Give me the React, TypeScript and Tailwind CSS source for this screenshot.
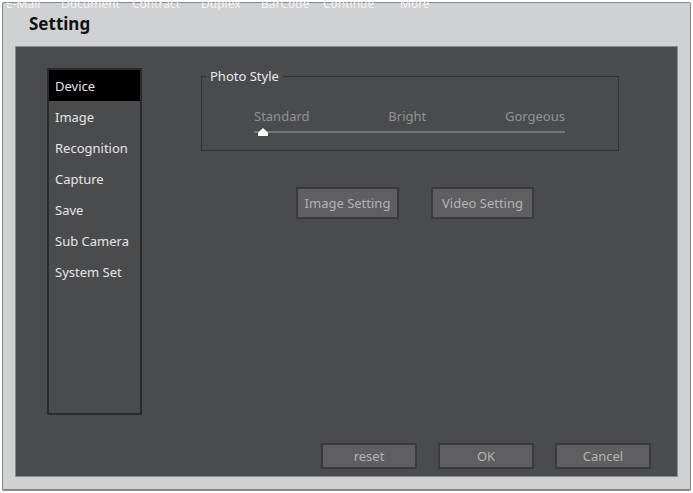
import { useState } from 'react'
import clsx from 'clsx'

const MENU = ['E-Mail', 'Document', 'Contract', 'Duplex', 'BarCode', 'Continue', 'More']

const TABS = ['Device', 'Image', 'Recognition', 'Capture', 'Save', 'Sub Camera', 'System Set']

const STYLES = ['Standard', 'Bright', 'Gorgeous']

function DialogButton({ label, className }: { label: string; className: string }) {
  return (
    <button
      type="button"
      className={clsx(
        'border-2 border-[#3a3a3c] bg-[#5f5f61] text-[13px] leading-4 text-[#b4b4b6]',
        className,
      )}
    >
      {label}
    </button>
  )
}

export default function App() {
  const [tab, setTab] = useState('Device')
  const [photoStyle, setPhotoStyle] = useState(0)

  return (
    <div className="relative flex h-screen flex-col overflow-hidden bg-white p-0.5 font-['Noto_Sans','Open_Sans',sans-serif]">
      {/* Main window menu, mostly hidden above the dialog */}
      <nav className="absolute -top-1 left-1.5 grid grid-cols-[55px_71px_69px_60px_62px_77px_auto] text-[12px] leading-4 text-[#f4f4f4]">
        {MENU.map((item) => (
          <span key={item}>{item}</span>
        ))}
      </nav>

      {/* Dialog */}
      <main className="flex flex-1 flex-col rounded-xs border border-b-2 border-[#858687] bg-[#d0d1d2] px-3 pb-3">
        <h1 className="px-3.5 pt-[9px] pb-2.5 text-[17px] leading-6 font-bold text-[#111]">Setting</h1>

        <div className="flex flex-1 flex-col border border-[#8b8c8d] bg-[#4a4b4d] pt-[21px] pr-[26px] pb-[7px] pl-[31px]">
          <div className="flex gap-[59px]">
            <ul className="h-[347px] w-[95px] shrink-0 border-2 border-[#2b2b2d]">
              {TABS.map((name) => (
                <li key={name}>
                  <button
                    type="button"
                    onClick={() => setTab(name)}
                    className={clsx(
                      'block h-[31px] w-full pl-1.5 text-left text-[13px] leading-4 whitespace-nowrap text-[#e6e6e6]',
                      tab === name && 'bg-black',
                    )}
                  >
                    {name}
                  </button>
                </li>
              ))}
            </ul>

            <section className="flex-1 pr-8">
              <fieldset className="border border-[#313234] pr-[53px] pb-2.5 pl-[52px]">
                <legend className="-ml-12 px-1 text-[13px] leading-4 text-[#ececec]">
                  Photo Style
                </legend>
                <div className="flex justify-between pt-6 text-[13px] leading-4 text-[#929395]">
                  {STYLES.map((name) => (
                    <span key={name}>{name}</span>
                  ))}
                </div>
                <input
                  type="range"
                  aria-label="Photo Style"
                  min={0}
                  max={2}
                  value={photoStyle}
                  onChange={(e) => setPhotoStyle(Number(e.target.value))}
                  className="block h-4 w-full appearance-none bg-[linear-gradient(#747577,#747577)] bg-[length:100%_2px] bg-center bg-no-repeat pl-1 [&::-webkit-slider-thumb]:h-2 [&::-webkit-slider-thumb]:w-2.5 [&::-webkit-slider-thumb]:appearance-none [&::-webkit-slider-thumb]:bg-white [&::-webkit-slider-thumb]:[clip-path:polygon(50%_0,100%_60%,100%_100%,0_100%,0_60%)]"
                />
              </fieldset>

              <div className="flex justify-center gap-8 pt-9 pl-2.5">
                <DialogButton label="Image Setting" className="h-8 w-[103px]" />
                <DialogButton label="Video Setting" className="h-8 w-[103px]" />
              </div>
            </section>
          </div>

          <div className="mt-auto flex justify-end gap-[21px]">
            <DialogButton label="reset" className="h-[26px] w-24" />
            <DialogButton label="OK" className="h-[26px] w-24" />
            <DialogButton label="Cancel" className="h-[26px] w-24" />
          </div>
        </div>
      </main>
    </div>
  )
}
